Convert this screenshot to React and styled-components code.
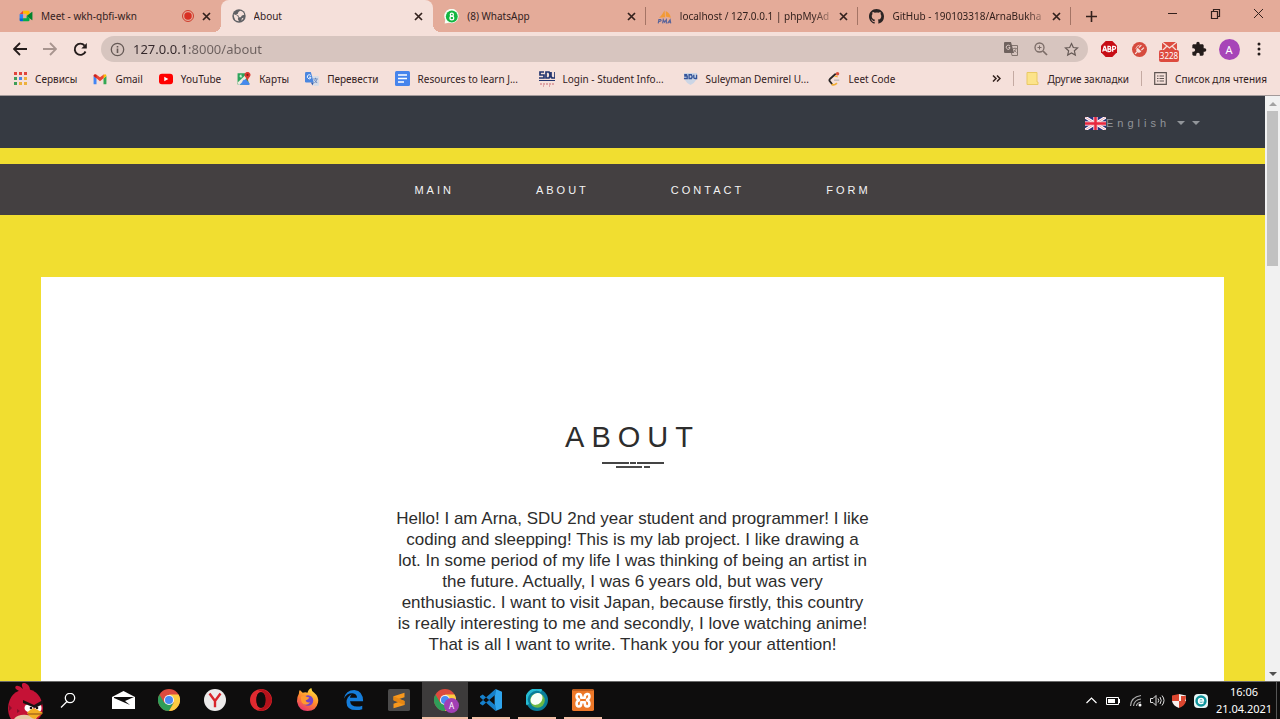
import React from "react";
import styled, { createGlobalStyle, css } from "styled-components";

const uiFont = '"Noto Sans", "Open Sans", sans-serif';
const pageFont = '"Liberation Sans", Arial, sans-serif';

const GlobalStyle = createGlobalStyle`
  *, *::before, *::after { box-sizing: border-box; }
  body { margin: 0; background: #0e0d0d; }
  button { border: 0; padding: 0; margin: 0; background: none; color: inherit; font: inherit; cursor: pointer; }
  a { color: inherit; text-decoration: none; }
  svg { display: block; flex: none; }
`;

const Desktop = styled.div`
  display: grid;
  grid-template-rows: auto minmax(0, 1fr) auto;
  height: 100vh;
  font-family: ${uiFont};
  font-size: 10px;
  color: #33211d;
`;

/* Browser frame */
const BrowserChrome = styled.header`
  background: #f5e0da;
  border-bottom: 1px solid #a39a9a;
`;

const TabStrip = styled.div`
  display: flex;
  height: 32px;
  padding-left: 8px;
  background: #e4ab99;
`;

const TabList = styled.div`
  display: grid;
  grid-template-columns: repeat(5, minmax(0, 1fr));
  flex: 0 1 1063px;
`;

const Tab = styled.div`
  position: relative;
  display: flex;
  align-items: center;
  gap: 8px;
  min-width: 0;
  padding: 0 10px 0 11px;
  ${({ $divided }) => $divided && css`
    &::after {
      content: "";
      position: absolute;
      right: 0;
      top: 7px;
      height: 18px;
      width: 1px;
      background: #a47465;
    }
  `}
  ${({ $active }) => $active && css`
    background: #f5e0da;
    border-radius: 8px 8px 0 0;
    &::before, &::after {
      content: "";
      position: absolute;
      bottom: 0;
      width: 8px;
      height: 8px;
    }
    &::before { left: -8px; background: radial-gradient(circle at 0 0, transparent 8px, #f5e0da 8px); }
    &::after { right: -8px; background: radial-gradient(circle at 100% 0, transparent 8px, #f5e0da 8px); }
  `}
`;

const TabTitle = styled.a`
  flex: 1;
  min-width: 0;
  overflow: hidden;
  white-space: nowrap;
  line-height: 16px;
  ${({ $fade }) => $fade && css`
    mask-image: linear-gradient(to right, #000 88%, transparent 104%);
  `}
`;

const CloseButton = styled.button`
  display: grid;
  place-items: center;
  width: 9px;
  height: 16px;
`;

const NewTabButton = styled.button`
  display: grid;
  place-items: center;
  width: 40px;
`;

const WindowControls = styled.div`
  display: flex;
  margin-left: auto;
`;

const WindowButton = styled.button`
  display: grid;
  place-items: center;
  width: 43px;
  height: 28px;
`;

const Toolbar = styled.div`
  display: flex;
  align-items: center;
  height: 34px;
  padding: 0 6px 0 5px;
`;

const ToolButton = styled.button`
  position: relative;
  display: grid;
  place-items: center;
  width: 30px;
  height: 28px;
  flex: none;
`;

const AddressBar = styled.form`
  display: flex;
  align-items: center;
  flex: 1;
  min-width: 0;
  height: 26px;
  margin: 0 6px;
  padding: 0 2px 0 9px;
  gap: 8px;
  border-radius: 13px;
  background: #d7c5bf;
`;

const AddressInput = styled.input`
  flex: 1;
  min-width: 0;
  border: 0;
  outline: 0;
  padding: 0;
  font: 13px/18px ${uiFont};
  color: transparent;
  background: linear-gradient(to right, #33272a 55px, #6b5f5d 55px) text;
`;

const AddressActions = styled.div`
  display: flex;
`;

const MailBadge = styled.span`
  position: absolute;
  left: 5px;
  bottom: 1px;
  width: 20px;
  height: 12px;
  border-radius: 2px;
  background: #dd4b3e;
  color: #fff;
  font-size: 8px;
  line-height: 12px;
  text-align: center;
`;

const Avatar = styled.span`
  display: grid;
  place-items: center;
  width: 21px;
  height: 21px;
  border-radius: 50%;
  background: #a745b8;
  color: #fff;
  font-size: 11px;
`;

const BookmarksBar = styled.nav`
  display: flex;
  align-items: center;
  height: 29px;
  padding: 0 13px 4px;
  gap: 16px;
  white-space: nowrap;
`;

const Bookmark = styled.a`
  display: flex;
  align-items: center;
  gap: 8px;
  line-height: 16px;
  ${({ $wide }) => $wide && css`
    flex: 0 0 128px;
  `}
`;

const OverflowGroup = styled.div`
  display: flex;
  align-items: center;
  gap: 12px;
  margin-left: auto;
`;

const Divider = styled.span`
  width: 1px;
  height: 15px;
  background: #c4aaa2;
`;

/* Site shown in the browser */
const Viewport = styled.div`
  display: flex;
  min-height: 0;
`;

const Site = styled.div`
  flex: 1;
  min-width: 0;
  overflow: hidden;
  background: #f1de30;
  font-family: ${pageFont};
`;

const LanguageBar = styled.div`
  display: flex;
  justify-content: flex-end;
  align-items: center;
  height: 52px;
  padding: 2px 65px 0 0;
  background: #363a42;
`;

const LanguageButton = styled.button`
  display: flex;
  align-items: center;
  color: #92959a;
  font-size: 11px;
  letter-spacing: 4px;
`;

const Caret = styled.span`
  margin: 0 0 1px 7px;
  border: 4px solid transparent;
  border-top-color: #92959a;
  border-bottom: 0;
`;

const SiteNav = styled.nav`
  display: flex;
  justify-content: center;
  align-items: center;
  gap: 82px;
  height: 51px;
  margin-top: 16px;
  padding-left: 20px;
  background: #444041;
  color: #f4f4f4;
  font-size: 11px;
  letter-spacing: 3px;
`;

const Card = styled.main`
  display: flex;
  flex-direction: column;
  align-items: center;
  margin: 62px 41px 0;
  padding: 142px 20px 142px;
  background: #fff;
  color: #2d2d2d;
`;

const Title = styled.h1`
  margin: 0;
  font-size: 29px;
  font-weight: 400;
  line-height: 36px;
  letter-spacing: 7px;
`;

const Ornament = styled.svg`
  margin-top: 7px;
`;

const Intro = styled.p`
  max-width: 475px;
  margin: 40px 0 0;
  font-size: 17px;
  line-height: 21px;
  text-align: center;
`;

const Scrollbar = styled.div`
  display: flex;
  flex-direction: column;
  width: 15px;
  background: #f1f1f1;
`;

const ScrollButton = styled.button`
  display: grid;
  place-items: center;
  height: 15px;
`;

const ScrollTrack = styled.div`
  flex: 1;
  padding: 0 2px;
`;

const ScrollThumb = styled.div`
  height: 28%;
  background: #c1c1c1;
`;

/* Taskbar */
const Taskbar = styled.footer`
  display: flex;
  height: 38px;
  border-top: 1px solid #6b6b6b;
  background: #0e0d0d;
  color: #fff;
  overflow: hidden;
`;

const StartButton = styled.button`
  display: grid;
  place-items: end center;
  width: 52px;
`;

const SearchButton = styled.button`
  display: grid;
  place-items: center;
  width: 32px;
  margin-right: 16px;
`;

const TaskButton = styled.button`
  position: relative;
  display: grid;
  place-items: center;
  width: 46px;
  padding-bottom: 2px;
  ${({ $active }) => $active && css`
    background: #3d3b3b;
  `}
  ${({ $open, $active }) => $open && css`
    &::after {
      content: "";
      position: absolute;
      left: ${$active ? 0 : 4}px;
      right: ${$active ? 0 : 4}px;
      bottom: 0;
      height: 2px;
      background: #f0bfa5;
    }
  `}
`;

const Tray = styled.div`
  display: flex;
  margin-left: auto;
  padding-right: 3px;
`;

const TrayButton = styled.button`
  display: grid;
  place-items: center;
  width: 22px;
`;

const Clock = styled.button`
  width: 65px;
  padding-bottom: 2px;
  border-right: 1px solid #555;
  font-size: 11px;
  line-height: 17px;
  letter-spacing: 0;
  text-align: center;
`;

/* Icons */
const Svg = ({ s = 14, w, h, vb = "0 0 24 24", children }) => (
  <svg width={w || s} height={h || s} viewBox={vb} fill="none" aria-hidden="true">{children}</svg>
);

const MeetIcon = () => (
  <Svg s={14}>
    <path d="M1 9l6-6v6z" fill="#ea4335" />
    <path d="M1 9h6v7H1z" fill="#2684fc" />
    <path d="M1 16h6v5H3q-2 0-2-2z" fill="#0066da" />
    <path d="M7 3h9q2 0 2 2v4l-5 3V8H7z" fill="#ffba00" />
    <path d="M7 16h6v-4l5 4v3q0 2-2 2H7z" fill="#00ac47" />
    <path d="M13 12l9-7q1-1 1 1v12q0 2-1 1z" fill="#00832d" />
  </Svg>
);
const GlobeIcon = () => (
  <Svg s={14}>
    <circle cx="12" cy="12" r="11.500" fill="#5f6064" />
    <path d="M3 9q6 1 8 5l-1 3 2 4Q3 21 3 9zM14 3q6 1 7 7l-4 1-2 3h-3l-1-3-4-1 3-2 1-3zM17 16l3-1q-1 3-4 5z" fill="#f5e0da" />
  </Svg>
);
const WhatsAppIcon = () => (
  <Svg s={15}>
    <path d="M1 23l1-6A11.500 11.500 0 1 1 8 22z" fill="#f6fff5" />
    <circle cx="12.500" cy="12" r="9.500" fill="#12b640" />
    <circle cx="12.500" cy="9" r="2.500" stroke="#fff" strokeWidth="2" />
    <circle cx="12.500" cy="14.500" r="3" stroke="#fff" strokeWidth="2" />
  </Svg>
);
const PmaIcon = () => (
  <Svg s={15}>
    <path d="M3 14Q7 12 12 2l1 11zM14 3q7 3 8 11l-8-2z" fill="#f29a35" />
    <path d="M2 23l1-6h3q2 2-2 3H3M9 23l1-6 2 4 3-4v6M17 23l4-6 1 6M18 21h4" stroke="#58649b" strokeWidth="1.800" />
  </Svg>
);
const GithubIcon = () => (
  <Svg s={15} vb="0 0 16 16">
    <path fill="#2b2424" d="M8 0C3.580 0 0 3.580 0 8c0 3.540 2.290 6.530 5.470 7.590.4.070.55-.17.55-.38 0-.19-.01-.82-.01-1.490-2.010.37-2.530-.49-2.690-.94-.09-.23-.48-.94-.82-1.130-.28-.15-.68-.52-.01-.53.63-.01 1.080.58 1.230.82.72 1.210 1.870.87 2.330.66.07-.52.28-.87.51-1.070-1.780-.2-3.640-.89-3.640-3.950 0-.87.31-1.590.82-2.150-.08-.2-.36-1.020.08-2.120 0 0 .67-.21 2.200.82A7.600 7.600 0 0 1 8 3.860c.68 0 1.360.09 2 .27 1.530-1.040 2.200-.82 2.200-.82.44 1.100.16 1.920.08 2.120.51.56.82 1.270.82 2.150 0 3.070-1.870 3.750-3.650 3.950.29.25.54.73.54 1.480 0 1.070-.01 1.930-.01 2.200 0 .21.15.46.55.38A8 8 0 0 0 16 8c0-4.420-3.580-8-8-8z" />
  </Svg>
);
const RecordIcon = () => (
  <Svg s={12}>
    <circle cx="12" cy="12" r="11" stroke="#cf3c2c" strokeWidth="2" />
    <circle cx="12" cy="12" r="7.500" fill="#d92f23" />
  </Svg>
);
const CrossIcon = () => (
  <Svg s={9} vb="0 0 9 9"><path d="M1 1l7 7M8 1L1 8" stroke="#33211d" strokeWidth="1.700" /></Svg>
);
const PlusIcon = () => (
  <Svg s={11} vb="0 0 11 11"><path d="M5.500 0v11M0 5.500h11" stroke="#33211d" strokeWidth="1.600" /></Svg>
);
const MinimizeIcon = () => (
  <Svg s={11} vb="0 0 11 11"><path d="M1 4.500h9" stroke="#33211d" /></Svg>
);
const RestoreIcon = () => (
  <Svg s={11} vb="0 0 11 11"><path d="M1.500 2.500h6v7h-6zM3.500 2V.5h6v7H8" stroke="#33211d" strokeWidth="1.200" /></Svg>
);
const WindowCloseIcon = () => (
  <Svg s={11} vb="0 0 11 11"><path d="M1 0l9 9M10 0L1 9" stroke="#33211d" /></Svg>
);
const ArrowIcon = ({ forward }) => (
  <Svg s={14} vb="0 0 14 14">
    <path
      d={forward ? "M0 7h12M7 1l6 6-6 6" : "M14 7H2M7 1L1 7l6 6"}
      stroke={forward ? "#a8958f" : "#241c1b"}
      strokeWidth="1.800"
    />
  </Svg>
);
const ReloadIcon = () => (
  <Svg s={15} vb="0 0 15 15">
    <path d="M12.500 9.500A5.600 5.600 0 1 1 11.600 3.600" stroke="#241c1b" strokeWidth="1.900" />
    <path d="M13.800 1v5.500H8.300z" fill="#241c1b" />
  </Svg>
);
const InfoIcon = () => (
  <Svg s={15} vb="0 0 15 15">
    <circle cx="7.500" cy="7.500" r="6.200" stroke="#655955" strokeWidth="1.300" />
    <path d="M7.500 6.500v4.500M7.500 4v1.500" stroke="#655955" strokeWidth="1.600" />
  </Svg>
);
const PageTranslateIcon = () => (
  <Svg s={14} vb="0 0 14 14">
    <path d="M6 3.500h7.500v10H8z" stroke="#83756f" />
    <path d="M0 1q0-1 1-1h6l3 11H1q-1 0-1-1z" fill="#6f625e" />
    <path d="M6 4Q4 2 2.500 4T4 7.500Q6 7.500 6 5.500H4.500" stroke="#d7c5bf" />
    <path d="M9 6.500h4M11 5.500v1M12 7q-.5 2-2.500 3M10 8l2.500 2.500" stroke="#83756f" strokeWidth=".8" />
  </Svg>
);
const ZoomIcon = () => (
  <Svg s={14} vb="0 0 14 14">
    <circle cx="5.500" cy="5.500" r="4.500" stroke="#7b6c67" strokeWidth="1.300" />
    <path d="M9 9l4 4" stroke="#7b6c67" strokeWidth="1.700" />
    <path d="M3.500 5.500h4M5.500 3.500v4" stroke="#7b6c67" />
  </Svg>
);
const StarIcon = () => (
  <Svg s={15}>
    <path d="M12 2.500l2.900 6.300 6.800.7-5.100 4.600 1.500 6.800-6.100-3.500-6.100 3.500 1.500-6.800-5.100-4.600 6.800-.7z" stroke="#655955" strokeWidth="1.900" />
  </Svg>
);
const AbpIcon = () => (
  <Svg s={16}>
    <path d="M7 0h10l7 7v10l-7 7H7l-7-7V7z" fill="#c70d15" />
    <path d="M2.500 16l2.500-8h1l2.500 8M3.500 13.500h4M10.500 8v8h2q2.500 0 2.500-2.200T12.500 12h-2 2Q14.500 12 14.500 10t-2-2zM17.500 16V8h2q2.500 0 2.500 2.200t-2.500 2.300h-2" stroke="#fff" strokeWidth="1.900" />
  </Svg>
);
const PlugIcon = () => (
  <Svg s={15}>
    <circle cx="12" cy="12" r="12" fill="#d64b3e" />
    <path d="M9 9l6 6q-4 4-7 1t1-7z" fill="#f8e2dd" />
    <path d="M8 16l-3 3M11 9l4-4M15 13l4-4" stroke="#f8e2dd" strokeWidth="2" />
    <path d="M6 11q1-5 6-6" stroke="#f8e2dd" strokeWidth="1.200" />
  </Svg>
);
const ExtMailIcon = () => (
  <Svg w={17} h={18} vb="0 0 17 18">
    <path d="M1 2h15v9H1z" fill="#dd4b3e" />
    <path d="M1 2l7.500 6L16 2M1 11l5-5M16 11l-5-5" stroke="#f5e0da" strokeWidth="1.300" />
  </Svg>
);
const PuzzleIcon = () => (
  <Svg s={16}>
    <path fill="#241c1b" d="M20.500 11H19V7c0-1.100-.9-2-2-2h-4V3.500a2.500 2.500 0 0 0-5 0V5H4c-1.100 0-2 .9-2 2v3.800h1.500a2.700 2.700 0 0 1 0 5.400H2V20c0 1.100.9 2 2 2h3.800v-1.500a2.700 2.700 0 0 1 5.400 0V22H17c1.100 0 2-.9 2-2v-4h1.500a2.500 2.500 0 0 0 0-5z" />
  </Svg>
);
const MenuIcon = () => (
  <Svg w={4} h={14} vb="0 0 4 14">
    <g fill="#241c1b"><circle cx="2" cy="2" r="1.500" /><circle cx="2" cy="7" r="1.500" /><circle cx="2" cy="12" r="1.500" /></g>
  </Svg>
);
const AppsIcon = () => (
  <Svg s={14} vb="0 0 14 14">
    {["#e0453c", "#e0453c", "#e0453c", "#3f9e57", "#4a86e8", "#edb13c", "#3f9e57", "#edb13c", "#edb13c"].map((c, i) => (
      <rect key={i} x={1 + (i % 3) * 5} y={Math.floor(i / 3) * 5} width="3" height="3" fill={c} />
    ))}
  </Svg>
);
const GmailIcon = () => (
  <Svg s={14}>
    <path d="M1 7l5 4v10H2q-1 0-1-1z" fill="#4285f4" />
    <path d="M23 7l-5 4v10h4q1 0 1-1z" fill="#34a853" />
    <path d="M1 7q0-4 4-3l7 5 7-5 0 6-7 6-7-6z" fill="#ea4335" />
    <path d="M18 5q5-3 5 2l-5 4z" fill="#fbbc04" />
    <path d="M1 7q0-4 5-2v6z" fill="#c5221f" />
  </Svg>
);
const YouTubeIcon = () => (
  <Svg s={14}>
    <rect x="0" y="3" width="24" height="18" rx="5" fill="#f00" />
    <path d="M9 8l7 4-7 4z" fill="#fff" />
  </Svg>
);
const MapsIcon = () => (
  <Svg s={14}>
    <path d="M1 2h15l5 20H3q-2 0-2-2z" fill="#2da45b" />
    <path d="M3 22L14 11l8 9-1 2z" fill="#4688ee" />
    <path d="M1 18L17 3l3 4L3 23z" fill="#efe9dd" />
    <path d="M9 16l3-3 9 9H13z" fill="#4688ee" />
    <path d="M8 5.500H5.500v3H8v-1" stroke="#fff" strokeWidth="1.500" />
    <path d="M18 16q-1-5-4-8a5 5 0 1 1 8 0q-3 3-4 8z" fill="#dc3b31" />
    <circle cx="18" cy="5" r="1.800" fill="#80201c" />
  </Svg>
);
const TranslateIcon = () => (
  <Svg s={14}>
    <path d="M12 7h10q2 0 2 2v13q0 2-2 2H15z" fill="#d9dde7" />
    <path d="M1 0h9l5 18H2q-2 0-2-2V2z" fill="#4a86df" />
    <path d="M10 18h5l-2 5z" fill="#2f5fb0" />
    <path d="M10 6Q7 3 4.500 6T7 12q3 0 3-3H7" stroke="#fff" strokeWidth="1.600" />
    <path d="M14 12h8M18 10v2M20 13q-1 4-4 6M16 14l5 5" stroke="#5c80bb" strokeWidth="1.500" />
  </Svg>
);
const DocIcon = () => (
  <Svg s={15} vb="0 0 15 15">
    <rect width="15" height="15" rx="1.500" fill="#4684ec" />
    <path d="M3 4h9M3 7.500h9M3 11h6" stroke="#fff" strokeWidth="1.500" />
  </Svg>
);
const SduLetters = () => (
  <path d="M5 1H1v3h4v3H0M7 1h3q2 3 0 6H7zM12 1v4q0 2 2 2h2V1" stroke="#23356f" strokeWidth="1.700" />
);
const SduIcon = () => (
  <Svg s={16} vb="0 0 16 16">
    <SduLetters />
    <path d="M0 9.500h16" stroke="#23356f" />
    <path d="M1 13h2M5 12v2M7 13h2M11 12v2M13 13h2M4 15h1M10 15h1" stroke="#c96872" />
  </Svg>
);
const SduShieldIcon = () => (
  <Svg s={15} vb="0 0 16 16">
    <path d="M1 2h14q1 9-7 13Q0 11 1 2z" fill="#cbd5e5" />
    <path d="M4.500 4H2v1.500h2.500V8H1M6.500 4H9q1.500 2 0 4H6.500zM11.500 4v3q0 1 1.500 1h1.500V4" stroke="#35549a" strokeWidth="1.400" />
  </Svg>
);
const LeetIcon = () => (
  <Svg s={14}>
    <path d="M15 3L5 12q-2 2 0 4l4 5" stroke="#282525" strokeWidth="3" />
    <path d="M8 21q4 3 9-2" stroke="#f2ae36" strokeWidth="3" />
    <path d="M12 14h9" stroke="#b5b0b0" strokeWidth="2" />
    <circle cx="18" cy="3" r="3" fill="#d94f3c" />
    <path d="M13 8q3-2 5 1" stroke="#f2ae36" strokeWidth="2" />
  </Svg>
);
const FolderIcon = () => (
  <Svg s={13} vb="0 0 13 13">
    <path d="M1 0h10v10h1v3H1z" fill="#fce38a" />
    <path d="M1 0.500h10V10h1v2.500H1z" stroke="#e9c964" />
  </Svg>
);
const ReadingListIcon = () => (
  <Svg s={13} vb="0 0 13 13">
    <path d="M.7.7h11.600v11.600H.7z" stroke="#5f5552" strokeWidth="1.200" />
    <path d="M3 4h1.500M3 6.500h1.500M3 9h1.500M5.500 4H10M5.500 6.500H10M5.500 9H10" stroke="#5f5552" strokeWidth="1.200" />
  </Svg>
);
const FlagIcon = () => (
  <svg width="21" height="13" viewBox="0 0 21 13" role="img" aria-label="United Kingdom">
    <path d="M0 0h21v13H0z" fill="#2a2f7d" />
    <path d="M0 0l21 13M21 0L0 13" stroke="#fff" strokeWidth="3" />
    <path d="M0 0l21 13M21 0L0 13" stroke="#eba3b0" strokeWidth="1" />
    <path d="M10.500 0v13M0 6.500h21" stroke="#f6c9d0" strokeWidth="4.500" />
    <path d="M10.500 0v13M0 6.500h21" stroke="#e8273f" strokeWidth="2.500" />
  </svg>
);
const ScrollArrow = ({ down }) => (
  <Svg w={8} h={4} vb="0 0 8 4"><path d={down ? "M0 0h8L4 4z" : "M0 4h8L4 0z"} fill={down ? "#505050" : "#a3a3a3"} /></Svg>
);

const BirdIcon = () => (
  <Svg w={36} h={36} vb="0 0 36 36">
    <path d="M14 9Q5 6 8 3q3-1 7 3Q12-1 17 0q5 2 5 7z" fill="#c81538" />
    <path d="M0 25Q1 8 18 6q15 1 17 19 0 7-5 11H3Q0 32 0 25z" fill="#c51236" />
    <path d="M6 36q4-5 13-4l10 2-1 2z" fill="#e5c8a6" />
    <path d="M1 22l3 3-3 3zM9 26l3 2-3 2z" fill="#85102a" />
    <ellipse cx="21" cy="25" rx="4.500" ry="4" fill="#fff" />
    <ellipse cx="30" cy="25" rx="3.500" ry="4" fill="#fff" />
    <path d="M15 17l11 5 9-5v4l-8 4-12-5z" fill="#1c1113" />
    <circle cx="23" cy="25" r="1.300" fill="#1c1113" />
    <circle cx="29" cy="25" r="1.300" fill="#1c1113" />
    <path d="M19 30q5-6 9-4l7 4-8 6q-5-1-8-6z" fill="#f3ae24" />
    <path d="M20 31q7 0 14 0" stroke="#8a4c14" />
  </Svg>
);
const SearchIcon = () => (
  <Svg s={16} vb="0 0 16 16">
    <circle cx="10" cy="5" r="4.700" stroke="#fff" strokeWidth="1.300" />
    <path d="M7 8.500L1 14.500" stroke="#fff" strokeWidth="1.300" />
  </Svg>
);
const MailIcon = () => (
  <Svg w={23} h={18} vb="0 0 23 18">
    <path d="M0 6L11.500 0 23 6v12H0z" fill="#fff" />
    <path d="M2 6h20l-9 4 5 4L2 7z" fill="#0e0d0d" />
  </Svg>
);
const ChromeIcon = () => (
  <Svg s={22}>
    <circle cx="12" cy="12" r="12" fill="#dd4b3e" />
    <path d="M1.600 6A12 12 0 0 0 12 24l5.200-9H12L6.800 15z" fill="#2f9d58" />
    <path d="M12 24A12 12 0 0 0 22.400 6H12l5.200 9z" fill="#fccd42" />
    <circle cx="12" cy="12" r="5.500" fill="#f5f5f5" />
    <circle cx="12" cy="12" r="4.400" fill="#4a8af4" />
  </Svg>
);
const ProfileDot = styled.span`
  position: absolute;
  right: 9px;
  bottom: 6px;
  width: 15px;
  height: 15px;
  border-radius: 50%;
  background: #a13fb5;
  font-size: 8px;
  line-height: 15px;
  text-align: center;
`;
const YandexIcon = () => (
  <Svg s={22}>
    <circle cx="12" cy="12" r="12" fill="#eceaea" />
    <path d="M6 5l6 8 6-8M12 12v8" stroke="#d8252b" strokeWidth="2.600" />
  </Svg>
);
const OperaIcon = () => (
  <Svg s={22}>
    <path fillRule="evenodd" d="M12 0a12 12 0 1 0 0 24 12 12 0 0 0 0-24zm0 3.500q5 0 5 8.500t-5 8.500T7 12t5-8.500z" fill="#e02a30" />
    <path d="M12 0q10 2 12 12-2 10-12 12l-3-2q8 0 8-10T9 2z" fill="#b5121b" />
    <ellipse cx="12" cy="12" rx="5" ry="8.500" fill="#0e0d0d" />
  </Svg>
);
const FirefoxIcon = () => (
  <Svg s={23}>
    <defs>
      <linearGradient id="fox" x1="18" y1="1" x2="6" y2="23" gradientUnits="userSpaceOnUse">
        <stop stopColor="#ffdf3d" /><stop offset=".5" stopColor="#ff8a2c" /><stop offset="1" stopColor="#e8336f" />
      </linearGradient>
    </defs>
    <path d="M3 6q0-3 1-4l3 3q3-1 5 0 1-4 4-5 0 3 3 5 5 4 4 10-2 9-11 9T1 14q0-5 2-8z" fill="url(#fox)" />
    <circle cx="12.500" cy="13" r="5.500" fill="#7442c9" />
    <path d="M5 9q4-2 6 0l3 1q-1 2-4 3 1 3 5 2-5 5-9 0-1-3-1-6z" fill="#ff9a2f" />
  </Svg>
);
const EdgeIcon = () => (
  <Svg s={21}>
    <path d="M1 11Q3 1 13 1q10 1 10 13H8q1 6 8 6 4 0 6-1v4q-3 1-7 1-11 0-11-9 0-6 6-9-2 2-2 4h8q0-4-4-5Q5 4 1 11z" fill="#157dda" />
  </Svg>
);
const SublimeIcon = () => (
  <Svg s={22}>
    <rect width="24" height="24" rx="2" fill="#4b4a4a" />
    <path d="M6 8l12-4v5l-6 2 6 2v4.500L6 21v-5l6-2-6-2z" fill="#f7981d" />
    <path d="M6 8l12 5v4.500L6 12.500z" fill="#e58613" />
  </Svg>
);
const VscodeIcon = () => (
  <Svg s={22}>
    <path d="M17 0l7 3v18l-7 3-1-7V7z" fill="#2fa4ec" />
    <path d="M17 6L3 18l-3-2v-1L17 0zM17 18L3 6 0 8v1l17 15z" fill="#1680cb" />
  </Svg>
);
const WebexIcon = () => (
  <Svg s={22}>
    <circle cx="12" cy="12" r="12" fill="#087d9a" />
    <path d="M2 17A11 11 0 0 1 17 2" stroke="#26bcd3" strokeWidth="3" />
    <circle cx="12.500" cy="12.500" r="8" fill="#6cba45" />
    <ellipse cx="11.500" cy="10.800" rx="7.200" ry="5.800" transform="rotate(-45 11.500 10.800)" fill="#f7fff9" />
  </Svg>
);
const XamppIcon = () => (
  <Svg s={22}>
    <rect width="24" height="24" rx="2" fill="#ed7828" />
    <path d="M1 1h22" stroke="#b95a1c" strokeWidth="2" />
    <path d="M10 9.500V8q0-2.500-2.500-2.500T5 8q0 3 2.500 3.500v1Q5 13 5 16t2.500 3q2.500 0 2.500-3v-1.500h4V16q0 3 2.500 3t2.500-3q0-3-2.500-3.500v-1Q19 11 19 8t-2.500-2.500T14 8v1.500z" stroke="#fff" strokeWidth="2.800" strokeLinejoin="round" />
  </Svg>
);
const ChevronIcon = () => (
  <Svg w={11} h={7} vb="0 0 11 7"><path d="M.5 6l5-5 5 5" stroke="#fff" strokeWidth="1.200" /></Svg>
);
const BatteryIcon = () => (
  <Svg w={14} h={10} vb="0 0 14 10">
    <path d="M.5 1.500h12v7H.5z" stroke="#fff" />
    <path d="M2 3h7v4H2zM13 3h1v4h-1z" fill="#fff" />
  </Svg>
);
const WifiIcon = () => (
  <Svg s={13} vb="0 0 13 13">
    <path d="M1.500 12Q2 3 12 1.500M4.500 12Q5 6 12 5M7.500 12q0-3 4.500-4" stroke="#aaa" strokeWidth="1.200" />
    <circle cx="11" cy="11" r="1.500" fill="#fff" />
  </Svg>
);
const VolumeIcon = () => (
  <Svg w={15} h={13} vb="0 0 15 13">
    <path d="M.5 4.500H3L6 1.500v10l-3-3H.5zM8 4.500q1.500 2 0 4M10 3q2.500 3.500 0 7M12 1.500q4 5 0 10" stroke="#ddd" />
  </Svg>
);
const ShieldIcon = () => (
  <Svg w={14} h={14} vb="0 0 14 14">
    <path d="M0 1.500L7 0v7H0zM7 7h7q-1 5-7 7z" fill="#dc4730" />
    <path d="M7 0l7 1.500V7H7zM0 7h7v7Q1 12 0 7z" fill="#f8efec" />
    <path d="M9 2l5 0q0 3-1 5H9z" fill="#dc4730" />
  </Svg>
);
const EsetIcon = () => (
  <Svg s={14} vb="0 0 14 14">
    <rect width="14" height="14" rx="4" fill="#e8f7f7" />
    <circle cx="7" cy="7" r="5.700" fill="#0e939b" />
    <path d="M4.500 7h5q0-2.500-2.500-2.500T4.500 7t2.500 2.500q1.500 0 2.500-1" stroke="#fff" strokeWidth="1.400" />
  </Svg>
);

const tabs = [
  { title: "Meet - wkh-qbfi-wkn", Icon: MeetIcon, recording: true },
  { title: "About", Icon: GlobeIcon, active: true },
  { title: "(8) WhatsApp", Icon: WhatsAppIcon, divided: true },
  { title: "localhost / 127.0.0.1 | phpMyAd", Icon: PmaIcon, divided: true, fade: true },
  { title: "GitHub - 190103318/ArnaBukha", Icon: GithubIcon, divided: true, fade: true },
];

const bookmarks = [
  { label: "Сервисы", Icon: AppsIcon },
  { label: "Gmail", Icon: GmailIcon },
  { label: "YouTube", Icon: YouTubeIcon },
  { label: "Карты", Icon: MapsIcon },
  { label: "Перевести", Icon: TranslateIcon },
  { label: "Resources to learn J...", Icon: DocIcon, wide: true },
  { label: "Login - Student Info...", Icon: SduIcon, wide: true },
  { label: "Suleyman Demirel U...", Icon: SduShieldIcon, wide: true },
  { label: "Leet Code", Icon: LeetIcon },
];

const apps = [
  { name: "Mail", Icon: MailIcon },
  { name: "Chrome", Icon: ChromeIcon },
  { name: "Yandex", Icon: YandexIcon },
  { name: "Opera", Icon: OperaIcon },
  { name: "Firefox", Icon: FirefoxIcon },
  { name: "Edge", Icon: EdgeIcon },
  { name: "Sublime Text", Icon: SublimeIcon },
  { name: "Chrome, profile A", Icon: ChromeIcon, active: true, open: true, profile: "A" },
  { name: "Visual Studio Code", Icon: VscodeIcon, open: true },
  { name: "Webex", Icon: WebexIcon, open: true },
  { name: "XAMPP", Icon: XamppIcon, open: true },
];

const tray = [
  ["Show hidden icons", ChevronIcon],
  ["Battery", BatteryIcon],
  ["Network", WifiIcon],
  ["Volume", VolumeIcon],
  ["Security", ShieldIcon],
  ["ESET", EsetIcon],
];

export default function App() {
  return (
    <Desktop>
      <GlobalStyle />
      <BrowserChrome>
        <TabStrip>
          <TabList>
            {tabs.map(({ title, Icon, active, divided, fade, recording }) => (
              <Tab key={title} $active={active} $divided={divided}>
                <Icon />
                <TabTitle href="#" $fade={fade}>{title}</TabTitle>
                {recording && <RecordIcon />}
                <CloseButton aria-label="Close tab"><CrossIcon /></CloseButton>
              </Tab>
            ))}
          </TabList>
          <NewTabButton aria-label="New tab"><PlusIcon /></NewTabButton>
          <WindowControls>
            <WindowButton aria-label="Minimize"><MinimizeIcon /></WindowButton>
            <WindowButton aria-label="Restore"><RestoreIcon /></WindowButton>
            <WindowButton aria-label="Close"><WindowCloseIcon /></WindowButton>
          </WindowControls>
        </TabStrip>
        <Toolbar>
          <ToolButton aria-label="Back"><ArrowIcon /></ToolButton>
          <ToolButton aria-label="Forward"><ArrowIcon forward /></ToolButton>
          <ToolButton aria-label="Reload"><ReloadIcon /></ToolButton>
          <AddressBar>
            <InfoIcon />
            <AddressInput aria-label="Address" defaultValue="127.0.0.1:8000/about" />
            <AddressActions>
              <ToolButton type="button" aria-label="Translate"><PageTranslateIcon /></ToolButton>
              <ToolButton type="button" aria-label="Zoom"><ZoomIcon /></ToolButton>
              <ToolButton type="button" aria-label="Bookmark"><StarIcon /></ToolButton>
            </AddressActions>
          </AddressBar>
          <ToolButton aria-label="Ad blocker"><AbpIcon /></ToolButton>
          <ToolButton aria-label="Plug"><PlugIcon /></ToolButton>
          <ToolButton aria-label="Unread mail"><ExtMailIcon /><MailBadge>3228</MailBadge></ToolButton>
          <ToolButton aria-label="Extensions"><PuzzleIcon /></ToolButton>
          <ToolButton aria-label="Profile"><Avatar>A</Avatar></ToolButton>
          <ToolButton aria-label="Menu"><MenuIcon /></ToolButton>
        </Toolbar>
        <BookmarksBar>
          {bookmarks.map(({ label, Icon, wide }) => (
            <Bookmark key={label} href="#" $wide={wide}><Icon />{label}</Bookmark>
          ))}
          <OverflowGroup>
            <button aria-label="More bookmarks">
              <Svg w={9} h={7} vb="0 0 9 7"><path d="M1 .5l3 3-3 3M5 .5l3 3-3 3" stroke="#33211d" strokeWidth="1.500" /></Svg>
            </button>
            <Divider />
            <Bookmark href="#"><FolderIcon />Другие закладки</Bookmark>
            <Divider />
            <Bookmark href="#"><ReadingListIcon />Список для чтения</Bookmark>
          </OverflowGroup>
        </BookmarksBar>
      </BrowserChrome>

      <Viewport>
        <Site>
          <LanguageBar>
            <LanguageButton><FlagIcon />English<Caret /><Caret /></LanguageButton>
          </LanguageBar>
          <SiteNav>
            <a href="#main">MAIN</a>
            <a href="#about">ABOUT</a>
            <a href="#contact">CONTACT</a>
            <a href="#form">FORM</a>
          </SiteNav>
          <Card>
            <Title>ABOUT</Title>
            <Ornament width="62" height="6" viewBox="0 0 62 6" aria-hidden="true">
              <path d="M0 1h27M28 1h6M35 1h27" stroke="#444" strokeWidth="2" />
              <path d="M14 5h26M42 5h6" stroke="#111" strokeWidth="1.500" />
            </Ornament>
            <Intro>
              Hello! I am Arna, SDU 2nd year student and programmer! I like coding and sleepping! This is my
              lab project. I like drawing a lot. In some period of my life I was thinking of being an artist in
              the future. Actually, I was 6 years old, but was very enthusiastic. I want to visit Japan, because
              firstly, this country is really interesting to me and secondly, I love watching anime! That is all
              I want to write. Thank you for your attention!
            </Intro>
          </Card>
        </Site>
        <Scrollbar>
          <ScrollButton aria-label="Scroll up"><ScrollArrow /></ScrollButton>
          <ScrollTrack><ScrollThumb /></ScrollTrack>
          <ScrollButton aria-label="Scroll down"><ScrollArrow down /></ScrollButton>
        </Scrollbar>
      </Viewport>

      <Taskbar>
        <StartButton aria-label="Start"><BirdIcon /></StartButton>
        <SearchButton aria-label="Search"><SearchIcon /></SearchButton>
        {apps.map(({ name, Icon, active, open, profile }) => (
          <TaskButton key={name} aria-label={name} $active={active} $open={open}>
            <Icon />
            {profile && <ProfileDot>{profile}</ProfileDot>}
          </TaskButton>
        ))}
        <Tray>
          {tray.map(([name, Icon]) => (
            <TrayButton key={name} aria-label={name}><Icon /></TrayButton>
          ))}
          <Clock>16:06<br />21.04.2021</Clock>
        </Tray>
      </Taskbar>
    </Desktop>
  );
}
